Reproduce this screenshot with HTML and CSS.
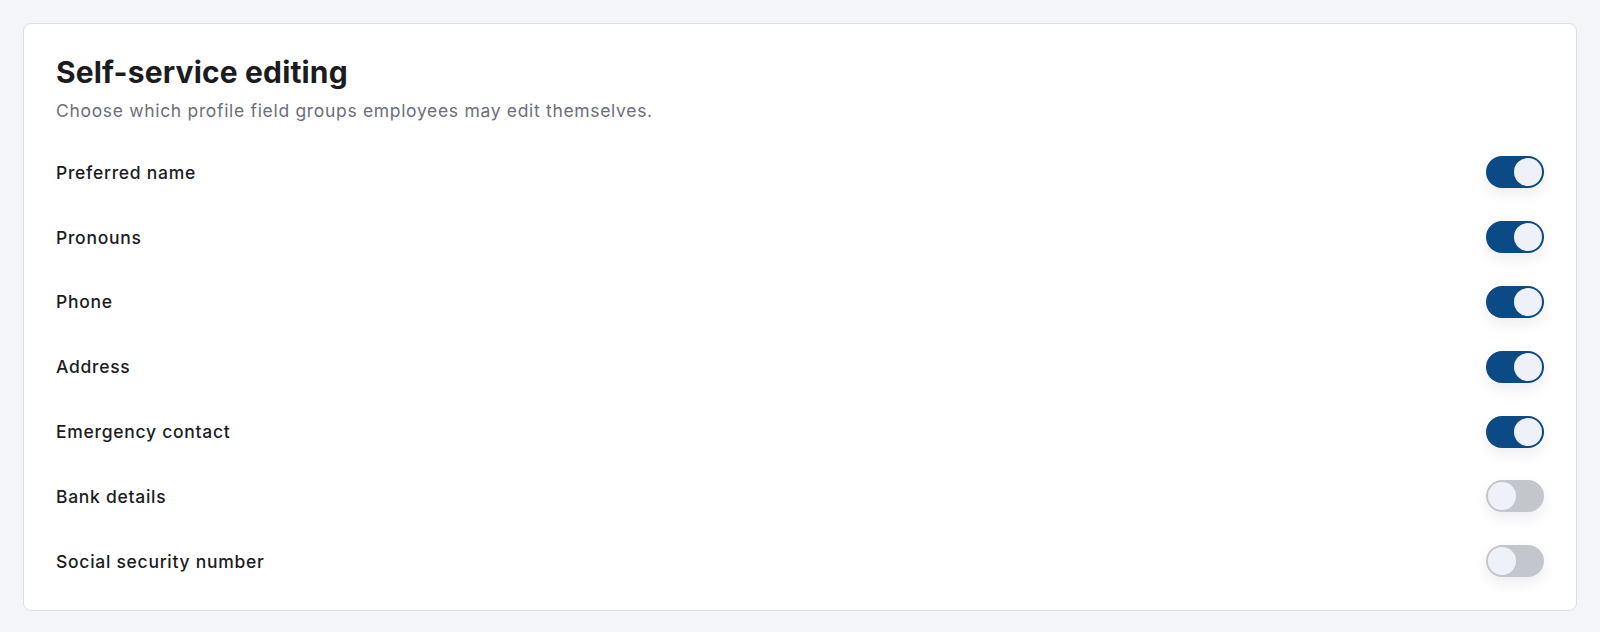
FILE: index.html
```html
<!DOCTYPE html>
<html lang="en">
<head>
  <meta charset="UTF-8">
  <meta name="viewport" content="width=device-width, initial-scale=1.0">
  <title>Self-service editing</title>
  <link rel="stylesheet" href="styles.css">
</head>
<body>
  <div class="card">
    <h1>Self-service editing</h1>
    <p class="subtitle">Choose which profile field groups employees may edit themselves.</p>

    <!-- Field group toggles -->
    <div class="row">
      <span class="row-label">Preferred name</span>
      <span class="toggle on"><span class="knob"></span></span>
    </div>
    <div class="row">
      <span class="row-label">Pronouns</span>
      <span class="toggle on"><span class="knob"></span></span>
    </div>
    <div class="row">
      <span class="row-label">Phone</span>
      <span class="toggle on"><span class="knob"></span></span>
    </div>
    <div class="row">
      <span class="row-label">Address</span>
      <span class="toggle on"><span class="knob"></span></span>
    </div>
    <div class="row">
      <span class="row-label">Emergency contact</span>
      <span class="toggle on"><span class="knob"></span></span>
    </div>
    <div class="row">
      <span class="row-label">Bank details</span>
      <span class="toggle"><span class="knob"></span></span>
    </div>
    <div class="row">
      <span class="row-label">Social security number</span>
      <span class="toggle"><span class="knob"></span></span>
    </div>
  </div>
</body>
</html>
```

FILE: styles.css
```css
body {
  font-family: Inter, "Noto Sans", sans-serif;
  margin: 0;
  padding: 23px;
  background-color: #f5f6fa;
  color: #1b1c1f;
}
.card {
  background-color: white;
  border: 1px solid #dcdee4;
  border-radius: 8px;
  padding: 29px 32px 17px;
}
h1 {
  margin: 0;
  font-size: 30px;
  font-weight: 700;
  letter-spacing: 0.15px;
  line-height: 38px;
}
.subtitle {
  margin: 8px 0 17px;
  font-size: 17.5px;
  letter-spacing: 0.68px;
  color: #6b6f78;
  line-height: 24px;
}
.row {
  display: flex;
  align-items: center;
  justify-content: space-between;
  padding: 16.4px 0;
}
.row-label {
  font-size: 17.5px;
  font-weight: 500;
  letter-spacing: 0.72px;
}
.toggle {
  display: flex;
  width: 58px;
  height: 32px;
  box-sizing: border-box;
  padding: 2px;
  border-radius: 16px;
  background-color: #c3c6cd;
  box-shadow: 0 6px 14px rgba(20, 30, 60, 0.08);
}
.toggle.on {
  background-color: #0b4a85;
  justify-content: flex-end;
}
.knob {
  width: 28px;
  height: 28px;
  border-radius: 50%;
  background-color: #eff1f8;
}
```
